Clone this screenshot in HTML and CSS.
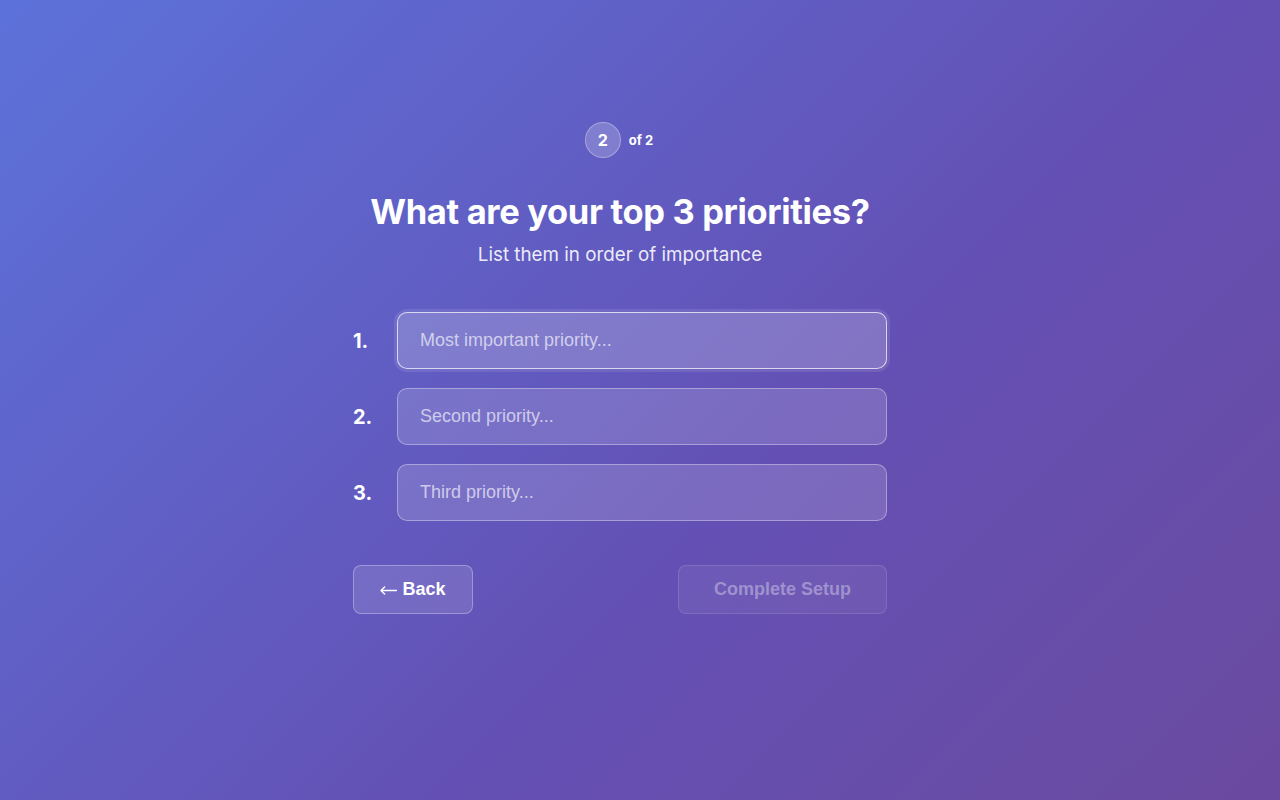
FILE: index.html
```html
<!DOCTYPE html>
<html lang="en">
<head>
<meta charset="utf-8">
<title>Setup</title>
<link rel="stylesheet" href="styles.css">
</head>
<body>
<main class="page">
  <section class="card">
    <div class="step">
      <span class="step-circle">2</span>
      <span class="step-total">of 2</span>
    </div>
    <h1 class="title">What are your top 3 priorities?</h1>
    <p class="subtitle">List them in order of importance</p>
    <div class="list">
      <div class="row">
        <span class="num">1.</span>
        <input class="field field-focus" type="text" placeholder="Most important priority..." autofocus>
      </div>
      <div class="row">
        <span class="num">2.</span>
        <input class="field" type="text" placeholder="Second priority...">
      </div>
      <div class="row">
        <span class="num">3.</span>
        <input class="field" type="text" placeholder="Third priority...">
      </div>
    </div>
    <div class="actions">
      <button class="btn btn-back" type="button"><svg class="arrow" width="17" height="9" viewBox="0 0 17 9" aria-hidden="true"><path d="M16.5 4.5H1.2M4.6 1L1 4.5L4.6 8" fill="none" stroke="#fff" stroke-width="1.4" stroke-linecap="round" stroke-linejoin="round"/></svg><span>Back</span></button>
      <button class="btn btn-complete" type="button" disabled>Complete Setup</button>
    </div>
  </section>
</main>
</body>
</html>
```

FILE: styles.css
```css
* { box-sizing: border-box; }
html, body { margin: 0; height: 100%; }
body {
  background: linear-gradient(135deg, #5c72da 0%, #6450b4 60%, #6a4a9f 100%);
  font-family: Inter, "Noto Sans", sans-serif;
  color: #fff;
}
.page {
  min-height: 800px;
  display: flex;
  justify-content: center;
  padding-top: 122px;
  padding-right: 40px;
}
.card {
  width: 534px;
  display: flex;
  flex-direction: column;
  align-items: stretch;
}
.step {
  display: flex;
  justify-content: center;
  align-items: center;
  gap: 8px;
  padding-right: 2px;
}
.step-circle {
  width: 36px;
  height: 36px;
  border-radius: 50%;
  background: rgba(255,255,255,0.2);
  border: 1px solid rgba(255,255,255,0.3);
  display: flex;
  align-items: center;
  justify-content: center;
  font-weight: 700;
  font-size: 16px;
}
.step-total {
  font-size: 13px;
  font-weight: 700;
}
.title {
  margin: 33px 0 0;
  text-align: center;
  font-size: 34.5px;
  line-height: 41px;
  font-weight: 700;
  letter-spacing: -0.35px;
}
.subtitle {
  margin: 9px 0 0;
  text-align: center;
  font-size: 18.8px;
  line-height: 28px;
  color: rgba(255,255,255,0.9);
}
.list {
  margin-top: 43px;
  display: flex;
  flex-direction: column;
  gap: 19px;
}
.row {
  display: flex;
  align-items: center;
}
.num {
  width: 44px;
  font-size: 20px;
  font-weight: 700;
}
.field {
  flex: 1;
  height: 57px;
  border-radius: 10px;
  border: 1px solid rgba(255,255,255,0.35);
  background: rgba(255,255,255,0.15);
  color: #fff;
  font-family: "Liberation Sans", Arial, sans-serif;
  font-size: 18px;
  padding: 0 22px;
  outline: none;
  caret-color: #fff;
}
.field::placeholder { color: rgba(255,255,255,0.65); }
.field-focus {
  border: 1px solid rgba(255,255,255,0.7);
  background: rgba(255,255,255,0.2);
  box-shadow: 0 0 0 3px rgba(255,255,255,0.1);
}
.actions {
  margin-top: 44px;
  display: flex;
  justify-content: space-between;
}
.btn {
  height: 49px;
  border-radius: 8px;
  font-family: "Liberation Sans", Arial, sans-serif;
  font-size: 18px;
  font-weight: 700;
  color: #fff;
  cursor: pointer;
  display: flex;
  align-items: center;
  justify-content: center;
  gap: 5px;
}
.arrow {
  display: block;
  margin-top: 2px;
}
.btn-back {
  width: 120px;
  background: rgba(255,255,255,0.12);
  border: 1px solid rgba(255,255,255,0.3);
}
.btn-complete {
  width: 209px;
  background: rgba(255,255,255,0.06);
  border: 1px solid rgba(255,255,255,0.12);
  color: rgba(255,255,255,0.35);
  cursor: default;
}
```
